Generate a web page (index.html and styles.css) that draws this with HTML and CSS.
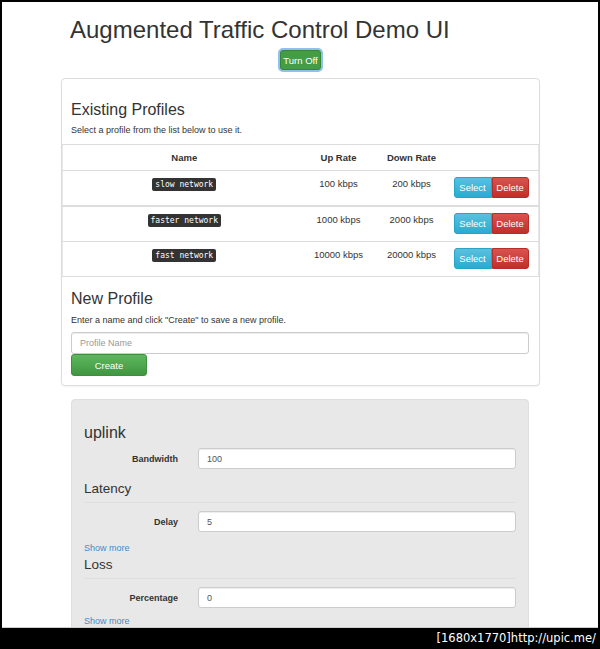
FILE: index.html
```html
<!DOCTYPE html>
<html lang="en">
<head>
    <meta charset="UTF-8">
    <meta name="viewport" content="width=device-width, initial-scale=1.0">
    <title>Augmented Traffic Control Demo UI</title>
    <link rel="stylesheet" href="styles.css">
</head>
<body>

    <div class="screen">
        <div class="container">
            <h1>Augmented Traffic Control Demo UI</h1>

            <div class="toggle-row">
                <button class="btn-toggle">Turn Off</button>
            </div>

            <!-- Profiles panel -->
            <div class="panel">
                <div class="panel-head">
                    <h3>Existing Profiles</h3>
                    <p>Select a profile from the list below to use it.</p>
                </div>

                <table class="profiles">
                    <colgroup>
                        <col class="col-name">
                        <col class="col-up">
                        <col class="col-down">
                        <col>
                    </colgroup>
                    <thead>
                        <tr>
                            <th>Name</th>
                            <th>Up Rate</th>
                            <th>Down Rate</th>
                            <th></th>
                        </tr>
                    </thead>
                    <tbody>
                        <tr>
                            <td><code>slow network</code></td>
                            <td>100 kbps</td>
                            <td>200 kbps</td>
                            <td class="actions">
                                <div class="btn-group">
                                    <button class="btn select">Select</button>
                                    <button class="btn delete">Delete</button>
                                </div>
                            </td>
                        </tr>
                        <tr class="sep">
                            <td><code>faster network</code></td>
                            <td>1000 kbps</td>
                            <td>2000 kbps</td>
                            <td class="actions">
                                <div class="btn-group">
                                    <button class="btn select">Select</button>
                                    <button class="btn delete">Delete</button>
                                </div>
                            </td>
                        </tr>
                        <tr>
                            <td><code>fast network</code></td>
                            <td>10000 kbps</td>
                            <td>20000 kbps</td>
                            <td class="actions">
                                <div class="btn-group">
                                    <button class="btn select">Select</button>
                                    <button class="btn delete">Delete</button>
                                </div>
                            </td>
                        </tr>
                    </tbody>
                </table>

                <div class="panel-body">
                    <h3>New Profile</h3>
                    <p>Enter a name and click "Create" to save a new profile.</p>
                    <input type="text" class="form-control" placeholder="Profile Name">
                    <button class="btn create">Create</button>
                </div>
            </div>

            <!-- Shaping settings -->
            <div class="well">
                <h3>uplink</h3>
                <div class="form-row">
                    <label>Bandwidth</label>
                    <input type="text" class="form-control" value="100">
                </div>

                <div class="legend">Latency</div>
                <div class="form-row">
                    <label>Delay</label>
                    <input type="text" class="form-control" value="5">
                </div>
                <a href="#" class="more">Show more</a>

                <div class="legend">Loss</div>
                <div class="form-row">
                    <label>Percentage</label>
                    <input type="text" class="form-control" value="0">
                </div>
                <a href="#" class="more more-last">Show more</a>
            </div>
        </div>
    </div>

    <div class="stamp">[1680x1770]http://upic.me/</div>

</body>
</html>
```

FILE: styles.css
```css
* {
    box-sizing: border-box;
}
body {
    margin: 0;
    background-color: #000;
    font-family: "Liberation Sans", Arial, sans-serif;
    font-size: 9px;
    color: #333;
}
.screen {
    margin: 2px 2px 0;
    height: 626px;
    background-color: #fff;
    border-bottom: 1px solid #ccc;
    overflow: hidden;
}
.container {
    width: 479px;
    margin-left: 59px;
}
h1 {
    margin: 14px 0 0 9px;
    font-size: 24px;
    line-height: 27px;
    font-weight: normal;
}
h3 {
    margin: 0;
    font-size: 16px;
    line-height: 20px;
    font-weight: normal;
}
p {
    margin: 0;
    line-height: 14px;
}

/* Turn on / off */
.toggle-row {
    margin-top: 7px;
    text-align: center;
}
.btn-toggle {
    width: 41px;
    height: 20px;
    padding: 0;
    border: 1px solid #398439;
    border-radius: 3px;
    background-color: #449d44;
    color: #fff;
    font-family: inherit;
    font-size: 9.5px;
    box-shadow: 0 0 0 2px #8fc0ee;
}

/* Panel */
.panel {
    margin-top: 8px;
    border: 1px solid #ddd;
    border-radius: 4px;
    background-color: #fff;
    box-shadow: 0 1px 2px rgba(0, 0, 0, 0.05);
}
.panel-head {
    padding: 21px 9px 0;
}
.panel-head p {
    margin-top: 3px;
}
.profiles {
    width: 100%;
    margin-top: 7px;
    border-collapse: collapse;
    table-layout: fixed;
    border-left: 1px solid #e6e6e6;
    border-right: 1px solid #e6e6e6;
    border-bottom: 1px solid #ddd;
    font-size: 9.5px;
}
.col-name { width: 243px; }
.col-up { width: 66px; }
.col-down { width: 80px; }
.profiles th {
    padding: 6px 2px;
    line-height: 13px;
    border-top: 1px solid #ddd;
    font-weight: bold;
    text-align: center;
}
.profiles td {
    height: 35px;
    padding: 6px 2px 7px;
    line-height: 13px;
    border-top: 1px solid #ddd;
    text-align: center;
    vertical-align: top;
}
.profiles tr.sep td {
    border-top: 2px solid #ddd;
}
.profiles td.actions {
    text-align: left;
    padding-left: 2px;
}
code {
    display: inline-block;
    padding: 1px 3px;
    border-radius: 2px;
    background-color: #333;
    color: #fff;
    font-family: "DejaVu Sans Mono", monospace;
    font-size: 8px;
    line-height: 11px;
}

/* Buttons */
.btn-group {
    display: inline-flex;
}
.btn {
    height: 21px;
    padding: 0;
    border: 1px solid transparent;
    border-radius: 3px;
    color: #fff;
    font-family: inherit;
    font-size: 9.5px;
    cursor: pointer;
}
.select {
    width: 38px;
    border-color: #28a4c9;
    border-radius: 3px 0 0 3px;
    background: linear-gradient(#5bc0de, #2aabd2);
}
.delete {
    width: 37px;
    border-color: #b92c28;
    border-radius: 0 3px 3px 0;
    background: linear-gradient(#d9534f, #c12e2a);
}
.create {
    display: block;
    width: 76px;
    height: 22px;
    border-color: #3e8f3e;
    background: linear-gradient(#5cb85c, #419641);
}

/* New profile */
.panel-body {
    padding: 12px 10px 9px 9px;
}
.panel-body p {
    margin: 4px 0 5px;
}
.form-control {
    display: block;
    width: 100%;
    height: 22px;
    padding: 0 8px;
    border: 1px solid #ccc;
    border-radius: 3px;
    background-color: #fff;
    box-shadow: inset 0 1px 1px rgba(0, 0, 0, 0.075);
    color: #555;
    font-family: inherit;
    font-size: 9px;
}
.form-control::placeholder {
    color: #999;
}

/* Well with settings */
.well {
    margin: 13px 11px 0 10px;
    padding: 23px 12px 40px;
    border: 1px solid #dedede;
    border-radius: 4px;
    background-color: #e8e8e8;
}
.form-row {
    display: flex;
    align-items: center;
    gap: 20px;
    margin-top: 5px;
}
.form-row label {
    width: 94px;
    flex-shrink: 0;
    text-align: right;
    font-weight: bold;
}
.form-row .form-control {
    height: 21px;
}
.legend {
    margin-top: 10px;
    padding-bottom: 4px;
    border-bottom: 1px solid #dfdfdf;
    font-size: 13.5px;
    line-height: 19px;
}
.legend + .form-row {
    margin-top: 8px;
}
.more + .legend {
    margin-top: 1px;
}
.more {
    display: block;
    margin-top: 10px;
    line-height: 12px;
    color: #428bca;
    text-decoration: none;
}
.more-last {
    margin-top: 7px;
}

/* Upload stamp */
.stamp {
    height: 21px;
    padding-right: 4px;
    text-align: right;
    color: #fff;
    font-family: "DejaVu Sans", sans-serif;
    font-size: 11.5px;
    line-height: 21px;
}
```
